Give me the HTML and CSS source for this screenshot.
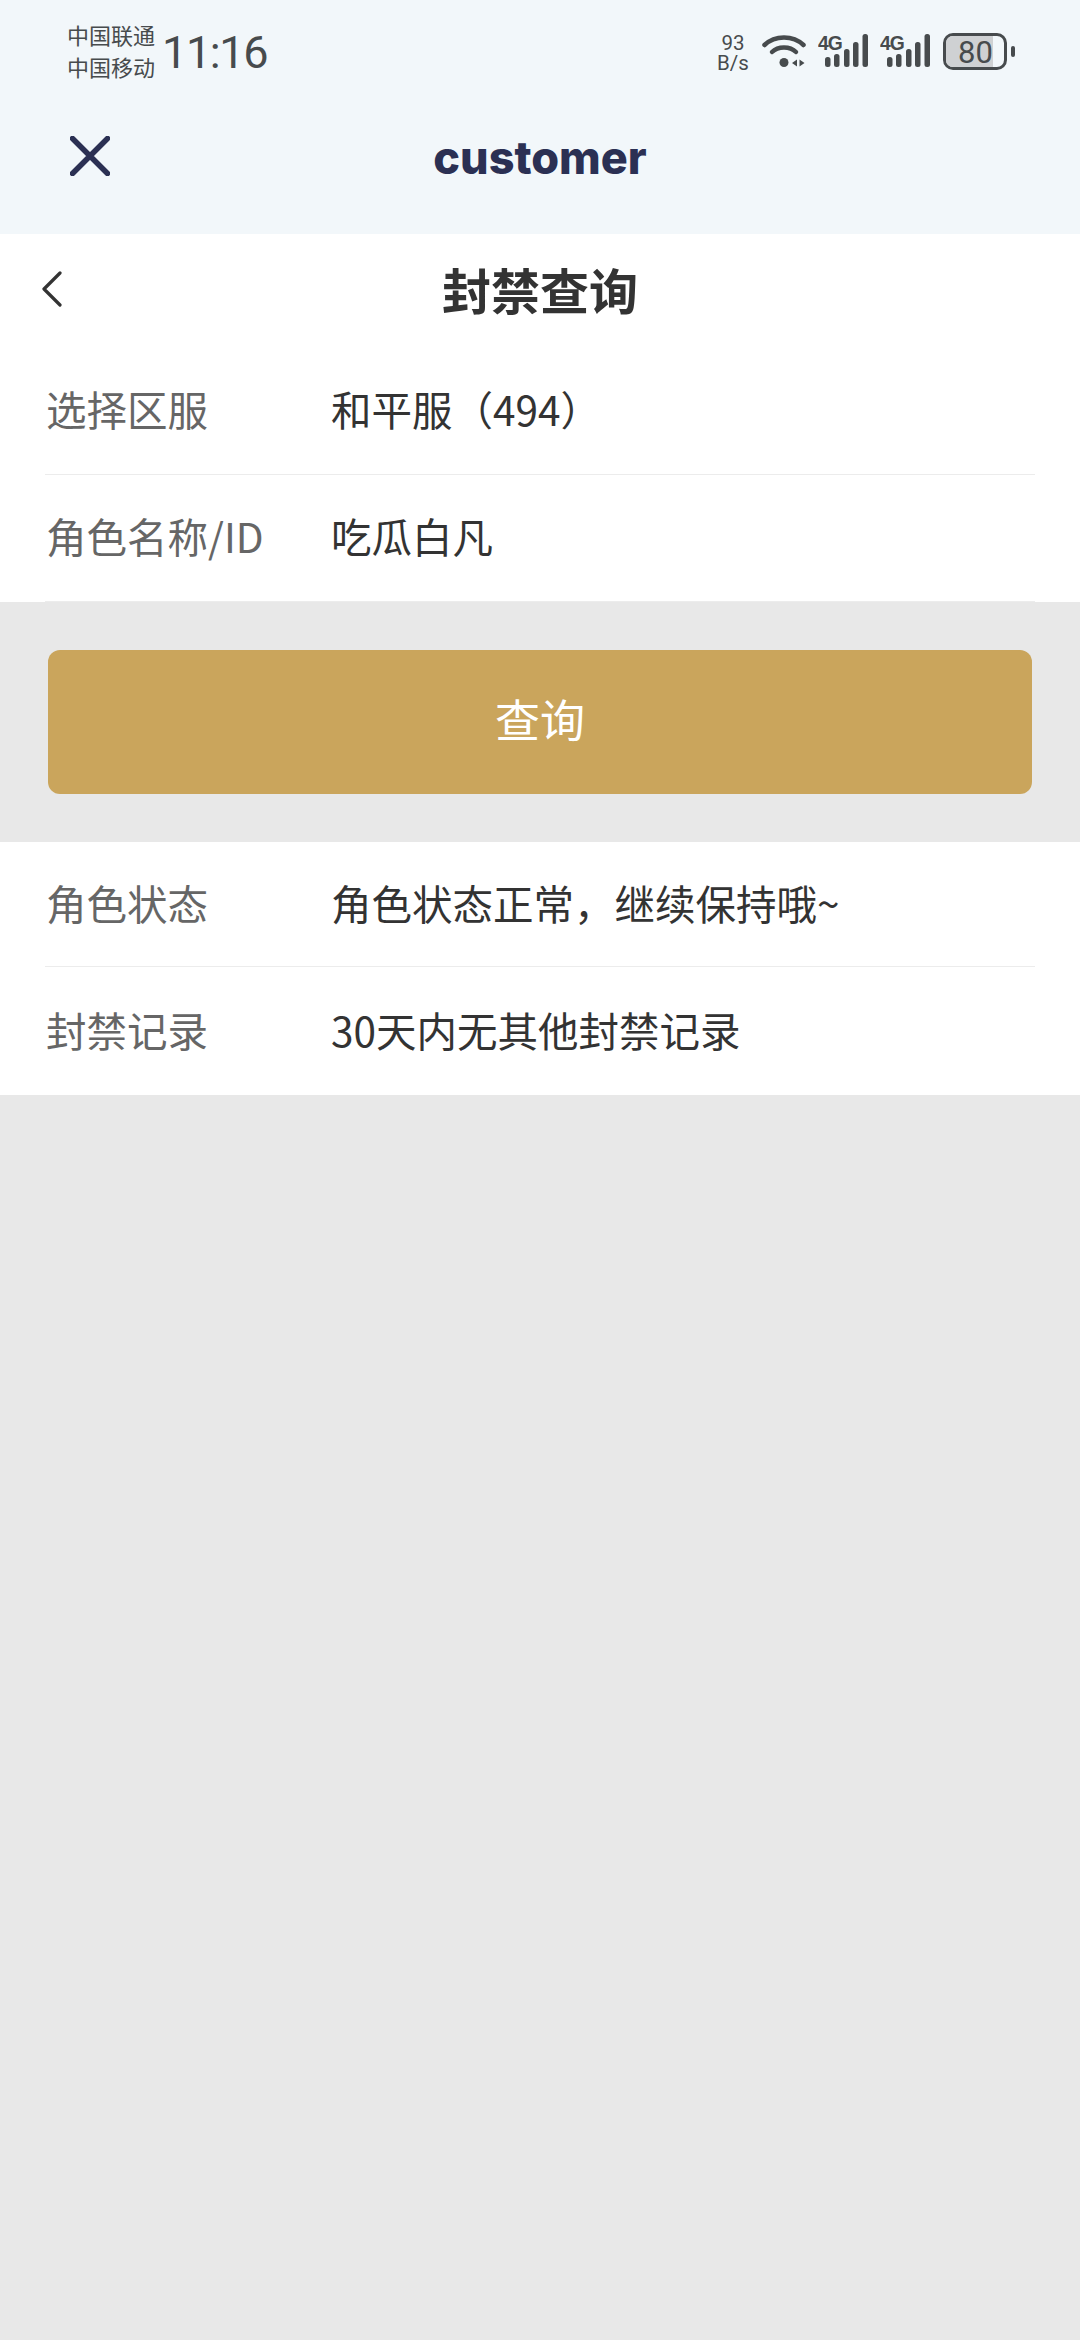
FILE: index.html
```html
<!DOCTYPE html>
<html lang="zh">
<head>
<meta charset="utf-8">
<title>封禁查询</title>
<link rel="stylesheet" href="styles.css">
</head>
<body>
<div class="top">
  <div class="status">
    <div class="carriers"><span>中国联通</span><span>中国移动</span></div>
    <div class="time">11:16</div>
    <div class="spacer"></div>
    <div class="speed"><span>93</span><span>B/s</span></div>
    <svg class="wifi" viewBox="0 0 44 34" width="44" height="34">
      <g fill="none" stroke="#474b4d" stroke-width="4.500" stroke-linecap="round">
        <path d="M2.500 11C13 1 31 1 41.500 11"/>
        <path d="M10 18C16 12 28 12 34 18"/>
      </g>
      <circle cx="22" cy="28.500" r="4.500" fill="#474b4d"/>
      <path d="M30 29l5-3.500v7zM37.500 25.500l5 3.500-5 3.500z" fill="#474b4d"/>
    </svg>
    <div class="sig">
      <span class="g4">4G</span>
      <svg viewBox="0 0 50 34" width="50" height="34"><g fill="#474b4d"><rect x="7" y="23" width="5.500" height="10" rx="2.500"/><rect x="16" y="20" width="5.500" height="13" rx="2.500"/><rect x="26" y="15" width="5.500" height="18" rx="2.500"/><rect x="35" y="8" width="5.500" height="25" rx="2.500"/><rect x="44.500" y="0" width="5.500" height="33" rx="2.500"/></g></svg>
    </div>
    <div class="sig">
      <span class="g4">4G</span>
      <svg viewBox="0 0 50 34" width="50" height="34"><g fill="#474b4d"><rect x="7" y="23" width="5.500" height="10" rx="2.500"/><rect x="16" y="20" width="5.500" height="13" rx="2.500"/><rect x="26" y="15" width="5.500" height="18" rx="2.500"/><rect x="35" y="8" width="5.500" height="25" rx="2.500"/><rect x="44.500" y="0" width="5.500" height="33" rx="2.500"/></g></svg>
    </div>
    <div class="battery"><div class="level">80</div></div>
    <div class="nub"></div>
  </div>
  <div class="appbar">
    <svg class="close" viewBox="0 0 40 40" width="40" height="40"><path d="M2.500 2.500L37.500 37.500M37.500 2.500L2.500 37.500" fill="none" stroke="#2b3053" stroke-width="5.500" stroke-linecap="round"/></svg>
    <div class="apptitle">customer</div>
  </div>
</div>
<div class="card">
  <div class="pagehead">
    <svg class="back" viewBox="0 0 20 36" width="20" height="36"><path d="M18 2L2 18L18 34" fill="none" stroke="#333" stroke-width="3.200" stroke-linecap="round" stroke-linejoin="round"/></svg>
    <h1>封禁查询</h1>
  </div>
  <div class="row first"><span class="label">选择区服</span><span class="value">和平服（494）</span></div>
  <div class="row second"><span class="label">角色名称/ID</span><span class="value">吃瓜白凡</span></div>
</div>
<div class="action"><button class="query" type="button">查询</button></div>
<div class="card result">
  <div class="row r1"><span class="label">角色状态</span><span class="value">角色状态正常，继续保持哦~</span></div>
  <div class="row r2"><span class="label">封禁记录</span><span class="value">30天内无其他封禁记录</span></div>
</div>
</body>
</html>
```
FILE: styles.css
```css
* { box-sizing: border-box; }
html, body { margin: 0; padding: 0; }
body {
  width: 1080px;
  height: 2340px;
  background: #e8e8e8;
  font-family: "Noto Sans CJK SC", "Noto Sans", sans-serif;
  overflow: hidden;
}
.top { height: 234px; background: #f2f7fa; }
.status {
  height: 100px;
  padding: 18px 65px 0 67px;
  display: flex;
  align-items: flex-start;
  color: #474b4d;
}
.carriers { display: flex; flex-direction: column; font-size: 22px; line-height: 32px; width: 95px; }
.time { font-family: Roboto, sans-serif; font-size: 45px; line-height: 54px; letter-spacing: -1.400px; margin-top: 8px; }
.spacer { flex: 1; }
.speed {
  display: flex; flex-direction: column; align-items: center;
  font-family: Roboto, sans-serif; font-size: 20.500px; line-height: 20px;
  margin-top: 15px; width: 34px;
}
.wifi { margin: 16px 0 0 12px; }
.sig { display: flex; position: relative; width: 50px; margin: 16px 0 0 12px; }
.sig:first-of-type { margin-left: 11px; }
.g4 { position: absolute; left: 0; top: -1px; font-family: "Liberation Sans", sans-serif; font-weight: 700; font-size: 21px; line-height: 20px; letter-spacing: -1px; transform: scaleX(.92); transform-origin: left; }
.sig svg { display: block; }
.battery {
  width: 64px; height: 37px; margin: 15px 0 0 13px;
  border: 3px solid #474b4d; border-radius: 10px;
  overflow: hidden;
}
.level {
  width: 47px; height: 100%; background: #cfd1d3;
  font-family: Roboto, sans-serif; font-size: 31px; line-height: 33px; padding-left: 12px;
  white-space: nowrap;
}
.nub { width: 4px; height: 11px; margin: 28px 0 0 4px; background: #474b4d; border-radius: 2px; }
.appbar { height: 134px; position: relative; display: flex; align-items: center; justify-content: center; padding-bottom: 18px; }
.close { position: absolute; left: 70px; top: 36px; }
.apptitle { font-family: Inter, sans-serif; font-weight: 800; font-size: 45px; line-height: 52px; color: #2b3053; }
.card { background: #fff; }
.pagehead { height: 109px; position: relative; display: flex; align-items: center; justify-content: center; }
.back { position: absolute; left: 42px; top: 37px; }
h1 { margin: 0; font-size: 49px; font-weight: 700; line-height: 60px; color: #333; }
.row {
  margin: 0 45px;
  height: 127px;
  display: flex;
  align-items: center;
  border-bottom: 1px solid #ececec;
  font-size: 40.500px;
  line-height: 56px;
}
.row.first { height: 132px; }
.row.second { padding-bottom: 4px; }
.label { width: 286px; color: #666; white-space: nowrap; padding-left: 1px; }
.value { color: #333; white-space: nowrap; }
.action { height: 240px; padding: 48px 48px 0; }
.query {
  display: block; width: 984px; height: 144px;
  background: #caa55c; border: 0; border-radius: 12px;
  color: #fff; font-family: inherit; font-size: 45px; padding: 0 0 8px;
}
.result { height: 253px; }
.row.r1 { height: 125px; padding-bottom: 3px; }
.row.r2 { height: 128px; border-bottom: 0; padding-bottom: 3px; }
```
